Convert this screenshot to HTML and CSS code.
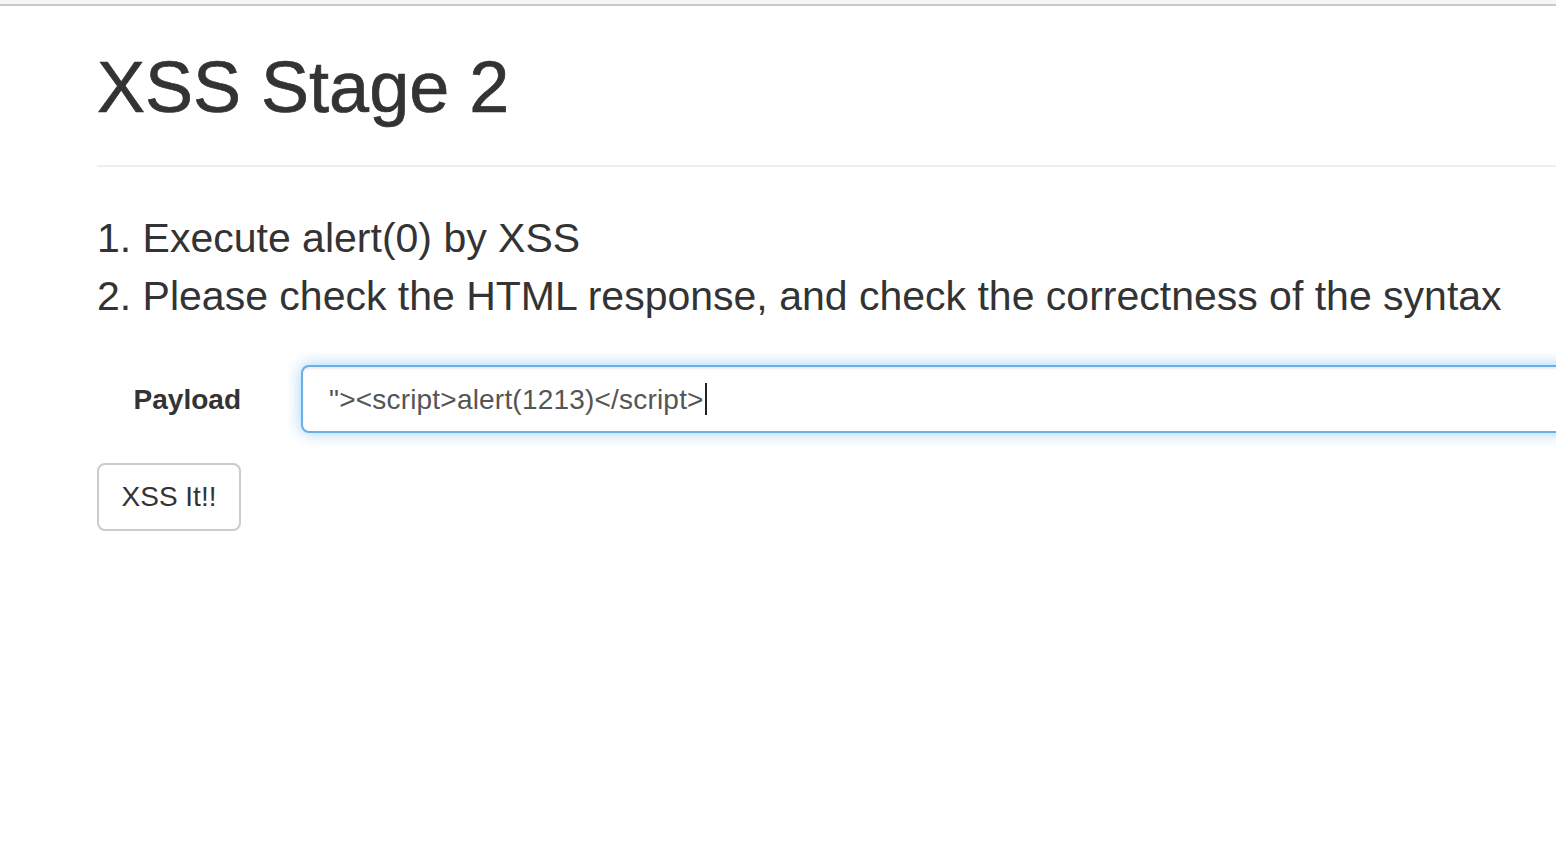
FILE: index.html
```html
<!DOCTYPE html>
<html lang="en">
<head>
<meta charset="utf-8">
<title>XSS Stage 2</title>
<link rel="stylesheet" href="styles.css">
</head>
<body>
<div class="topbar"></div>
<div class="container">
  <div class="page-header">
    <h1>XSS Stage 2</h1>
  </div>
  <p class="lead">1. Execute alert(0) by XSS<br>2. Please check the HTML response, and check the correctness of the syntax</p>
  <form class="form-horizontal">
    <div class="form-group">
      <label class="control-label">Payload</label>
      <div class="field">
        <div class="form-control focused">"&gt;&lt;script&gt;alert(1213)&lt;/script&gt;<span class="caret"></span></div>
      </div>
    </div>
    <button type="button" class="btn">XSS It!!</button>
  </form>
</div>
</body>
</html>
```
FILE: styles.css
```css
html, body {
  margin: 0;
  padding: 0;
  overflow: hidden;
  background: #fff;
}
body {
  font-family: "Liberation Sans", Arial, sans-serif;
  font-size: 28px;
  line-height: 1.42857;
  color: #333;
  width: 1556px;
  height: 860px;
}
.topbar {
  height: 4px;
  background: #f6f6f7;
  border-bottom: 2px solid #c8c8c8;
}
.container {
  width: 2400px;
  margin-left: 67px;
  padding: 0 30px;
}
.page-header {
  margin: 0 0 40px;
  padding-top: 42px;
  padding-bottom: 18px;
  border-bottom: 2px solid #eee;
}
h1 {
  margin: 0 0 20px;
  font-size: 72px;
  font-weight: 500;
  line-height: 1.1;
  color: #333;
  -webkit-text-stroke: 0.7px #333;
}
.lead {
  margin: 0 0 40px;
  padding-top: 2px;
  font-size: 41px;
  font-weight: 300;
  line-height: 58px;
}
.form-group {
  display: flex;
  margin: 0 -30px 30px;
}
.control-label {
  width: 144px;
  flex: 0 0 144px;
  padding: 15px 30px 0;
  text-align: right;
  font-weight: 700;
  line-height: 40px;
}
.field {
  flex: 1;
  padding: 0 30px;
}
.form-control {
  box-sizing: border-box;
  height: 68px;
  padding: 12px 24px 12px 26px;
  font-size: 28px;
  line-height: 41px;
  letter-spacing: 0.2px;
  color: #555;
  background: #fff;
  border: 2px solid #66afe9;
  border-radius: 8px;
  white-space: nowrap;
}
.form-control.focused {
  box-shadow: inset 0 2px 2px rgba(0,0,0,.075), 0 0 16px rgba(102,175,233,.6);
}
.caret {
  display: inline-block;
  width: 2px;
  height: 32px;
  background: #222;
  vertical-align: -6px;
  margin-left: 1px;
}
.btn {
  display: block;
  box-sizing: border-box;
  width: 144px;
  height: 68px;
  padding: 12px 0;
  font-family: inherit;
  font-size: 28px;
  line-height: 40px;
  color: #333;
  background: #fff;
  border: 2px solid #ccc;
  border-radius: 8px;
  text-align: center;
}
```
